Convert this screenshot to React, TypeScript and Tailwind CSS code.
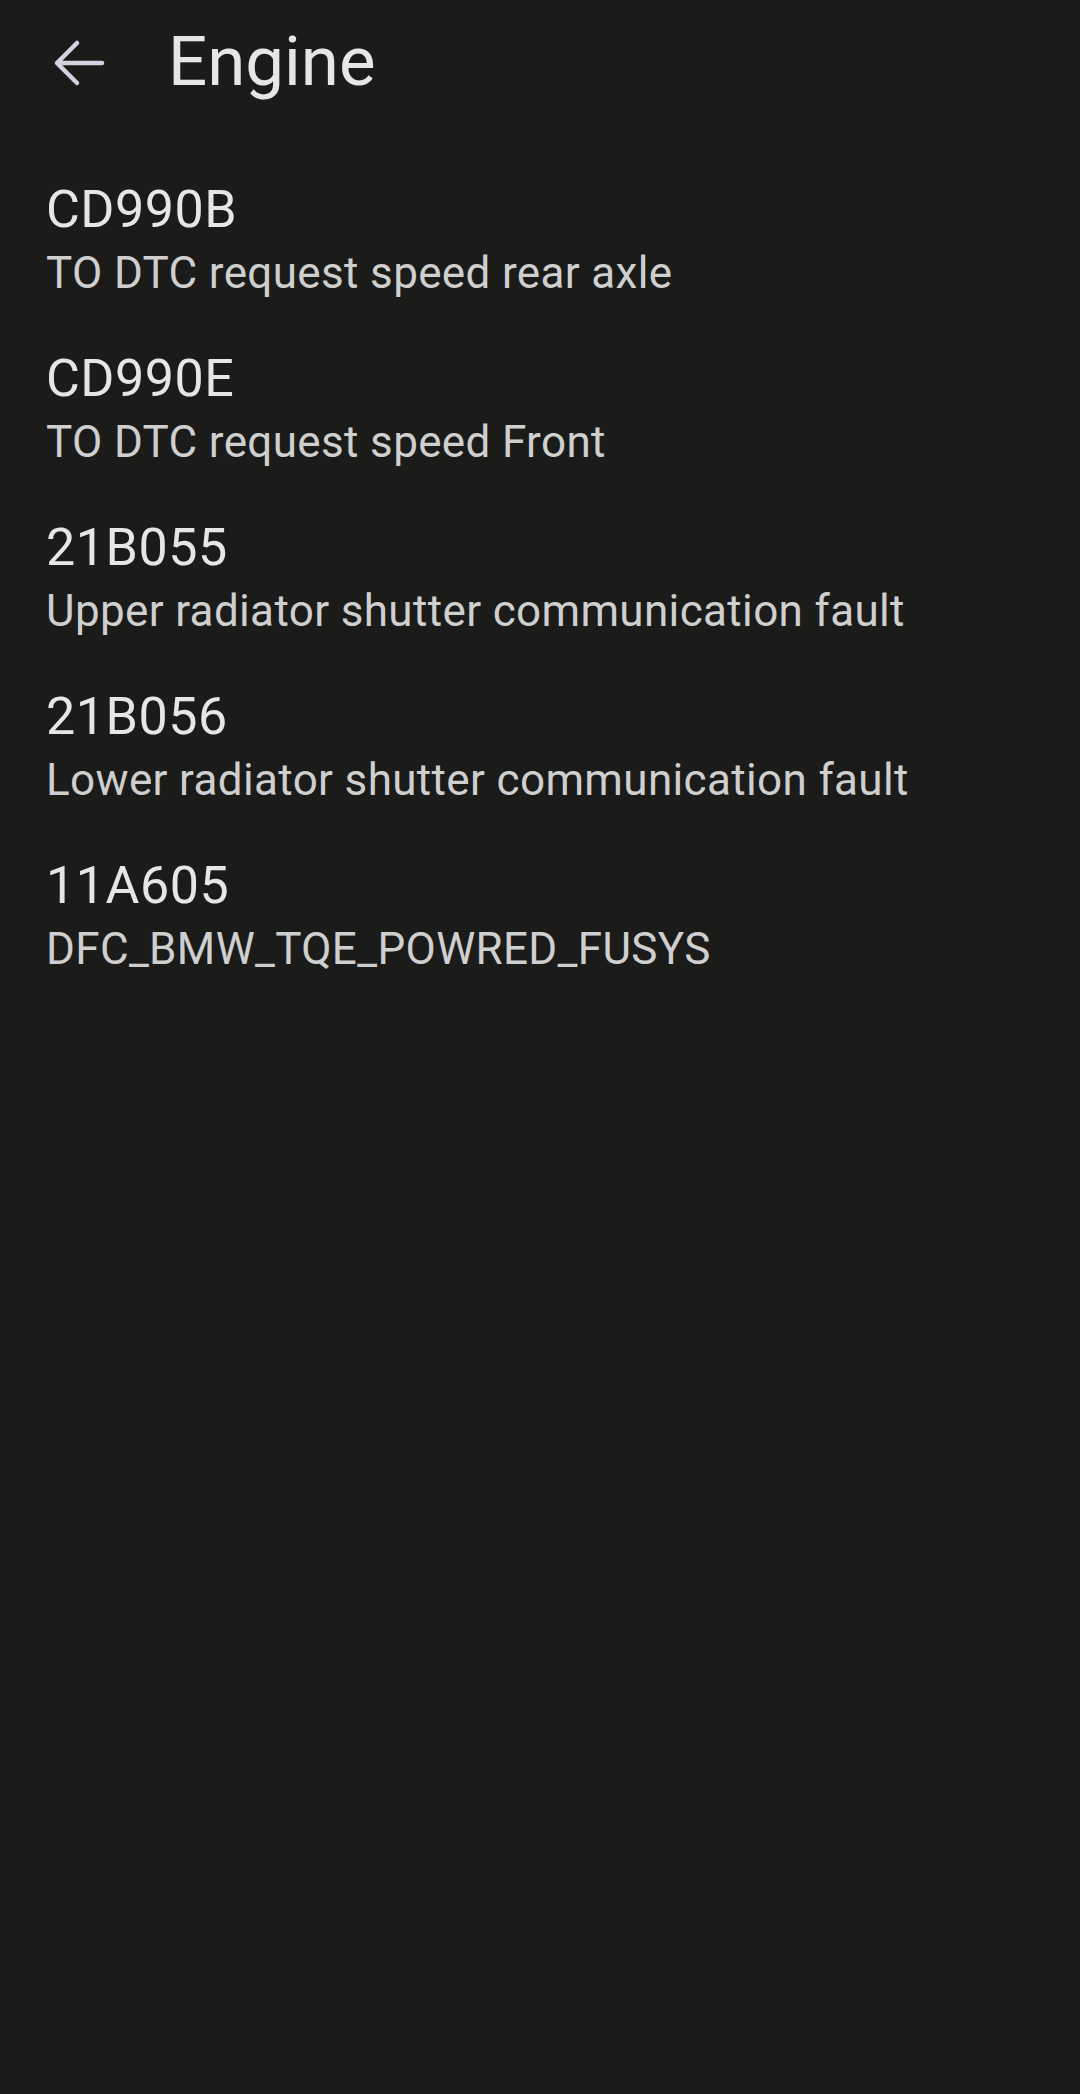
type Fault = {
  code: string;
  text: string;
};

const faults: Fault[] = [
  { code: "CD990B", text: "TO DTC request speed rear axle" },
  { code: "CD990E", text: "TO DTC request speed Front" },
  { code: "21B055", text: "Upper radiator shutter communication fault" },
  { code: "21B056", text: "Lower radiator shutter communication fault" },
  { code: "11A605", text: "DFC_BMW_TQE_POWRED_FUSYS" },
];

function BackArrow(): JSX.Element {
  return (
    <svg width="56" height="56" viewBox="0 0 56 56" fill="none" className="text-[#d4d2e0]">
      <path d="M7 28H52M27 8L7 28L27 48" stroke="currentColor" strokeWidth="4.5" strokeLinecap="round" strokeLinejoin="round" />
    </svg>
  );
}

export default function App(): JSX.Element {
  return (
    <div className="min-h-[2094px] w-full bg-[#1b1c1a] font-['Roboto','Noto_Sans',sans-serif]">
      <header className="flex h-[126px] items-center">
        <button type="button" className="ml-[50px] flex h-[56px] w-[56px] items-center justify-center">
          <BackArrow />
        </button>
        <h1 className="ml-[62px] -mt-[3px] text-[69px] leading-none text-[#e6e6e6]">Engine</h1>
      </header>

      <ul className="pt-[31px]">
        {faults.map((f) => (
          <li key={f.code} className="px-[46px] pt-[22px] pb-[21px]">
            <div className="text-[52px] leading-[62px] tracking-[0.01em] text-[#e6e6e6]">{f.code}</div>
            <div className="text-[44px] leading-[64px] tracking-[0.008em] text-[#cfcfcf]">{f.text}</div>
          </li>
        ))}
      </ul>
    </div>
  );
}
